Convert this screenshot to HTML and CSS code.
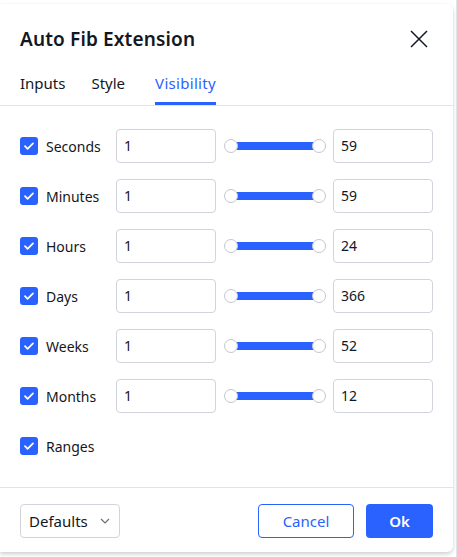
FILE: index.html
```html
<!DOCTYPE html>
<html>
<head>
<meta charset="utf-8">
<link rel="stylesheet" href="styles.css">
</head>
<body>
<div class="dialog">
  <div class="header">
    <div class="title">Auto Fib Extension</div>
    <svg class="close" width="18" height="18" viewBox="0 0 18 18"><path d="M1 1L17 17M17 1L1 17" stroke="#131722" stroke-width="1.5" fill="none"/></svg>
  </div>
  <div class="tabs">
    <div class="tab">Inputs</div>
    <div class="tab tab-style">Style</div>
    <div class="tab active">Visibility</div>
  </div>
  <div class="body">
    <div class="row">
      <span class="cb"><svg width="18" height="18" viewBox="0 0 18 18"><path d="M5 9.2l2.6 2.6L13 6.4" stroke="#fff" stroke-width="1.8" fill="none" stroke-linecap="round" stroke-linejoin="round"/></svg></span>
      <span class="label">Seconds</span>
      <div class="input">1</div>
      <div class="slider"><span class="h"></span><span class="track"></span><span class="h"></span></div>
      <div class="input">59</div>
    </div>
    <div class="row">
      <span class="cb"><svg width="18" height="18" viewBox="0 0 18 18"><path d="M5 9.2l2.6 2.6L13 6.4" stroke="#fff" stroke-width="1.8" fill="none" stroke-linecap="round" stroke-linejoin="round"/></svg></span>
      <span class="label">Minutes</span>
      <div class="input">1</div>
      <div class="slider"><span class="h"></span><span class="track"></span><span class="h"></span></div>
      <div class="input">59</div>
    </div>
    <div class="row">
      <span class="cb"><svg width="18" height="18" viewBox="0 0 18 18"><path d="M5 9.2l2.6 2.6L13 6.4" stroke="#fff" stroke-width="1.8" fill="none" stroke-linecap="round" stroke-linejoin="round"/></svg></span>
      <span class="label">Hours</span>
      <div class="input">1</div>
      <div class="slider"><span class="h"></span><span class="track"></span><span class="h"></span></div>
      <div class="input">24</div>
    </div>
    <div class="row">
      <span class="cb"><svg width="18" height="18" viewBox="0 0 18 18"><path d="M5 9.2l2.6 2.6L13 6.4" stroke="#fff" stroke-width="1.8" fill="none" stroke-linecap="round" stroke-linejoin="round"/></svg></span>
      <span class="label">Days</span>
      <div class="input">1</div>
      <div class="slider"><span class="h"></span><span class="track"></span><span class="h"></span></div>
      <div class="input">366</div>
    </div>
    <div class="row">
      <span class="cb"><svg width="18" height="18" viewBox="0 0 18 18"><path d="M5 9.2l2.6 2.6L13 6.4" stroke="#fff" stroke-width="1.8" fill="none" stroke-linecap="round" stroke-linejoin="round"/></svg></span>
      <span class="label">Weeks</span>
      <div class="input">1</div>
      <div class="slider"><span class="h"></span><span class="track"></span><span class="h"></span></div>
      <div class="input">52</div>
    </div>
    <div class="row">
      <span class="cb"><svg width="18" height="18" viewBox="0 0 18 18"><path d="M5 9.2l2.6 2.6L13 6.4" stroke="#fff" stroke-width="1.8" fill="none" stroke-linecap="round" stroke-linejoin="round"/></svg></span>
      <span class="label">Months</span>
      <div class="input">1</div>
      <div class="slider"><span class="h"></span><span class="track"></span><span class="h"></span></div>
      <div class="input">12</div>
    </div>
    <div class="row">
      <span class="cb"><svg width="18" height="18" viewBox="0 0 18 18"><path d="M5 9.2l2.6 2.6L13 6.4" stroke="#fff" stroke-width="1.8" fill="none" stroke-linecap="round" stroke-linejoin="round"/></svg></span>
      <span class="label">Ranges</span>
    </div>
  </div>
  <div class="footer">
    <div class="select">Defaults <svg width="10" height="6" viewBox="0 0 10 6"><path d="M1 1l4 4 4-4" stroke="#6a6d78" stroke-width="1.2" fill="none"/></svg></div>
    <div class="spacer"></div>
    <div class="btn cancel">Cancel</div>
    <div class="btn ok">Ok</div>
  </div>
</div>
</body>
</html>
```

FILE: styles.css
```css
html, body {
  margin: 0;
  padding: 0;
}
body {
  background: #ffffff;
  font-family: "Noto Sans", "Open Sans", sans-serif;
  color: #131722;
  width: 457px;
  height: 557px;
  overflow: hidden;
  border-right: 1px solid #e0e3eb;
  box-sizing: border-box;
}
.dialog {
  margin-top: 4px;
  width: 453px;
  height: 548px;
  background: #fff;
  border-radius: 0 6px 6px 0;
  box-shadow: 0 2px 4px rgba(0,0,0,0.2);
  display: flex;
  flex-direction: column;
}
.header {
  display: flex;
  align-items: center;
  justify-content: space-between;
  padding: 22px 25px 0 20px;
  height: 26px;
}
.title {
  font-size: 19px;
  font-weight: 600;
  letter-spacing: 0.15px;
}
.close {
  display: block;
}
.tabs {
  display: flex;
  gap: 26px;
  padding: 0 20px;
  margin-top: 14px;
  border-bottom: 1px solid #e0e3eb;
}
.tab {
  font-size: 15px;
  line-height: 22px;
  padding: 6px 0 8px;
  border-bottom: 3px solid transparent;
}
.tab-style {
  margin-right: 4px;
}
.tab.active {
  color: #2962ff;
  border-bottom-color: #2962ff;
  letter-spacing: 0.3px;
}
.body {
  display: flex;
  flex-direction: column;
  gap: 16px;
  padding: 23px 20px 24px;
  border-bottom: 1px solid #e0e3eb;
}
.row {
  display: flex;
  align-items: center;
  height: 34px;
}
.cb {
  width: 18px;
  height: 18px;
  background: #2962ff;
  border-radius: 3px;
  margin-right: 8px;
  display: flex;
}
.label {
  width: 70px;
  font-size: 14px;
}
.input {
  width: 100px;
  height: 34px;
  box-sizing: border-box;
  border: 1px solid #d1d4dc;
  border-radius: 4px;
  font-size: 14px;
  line-height: 32px;
  padding-left: 7px;
}
.slider {
  flex: 1;
  margin: 0 7px 0 8px;
  display: flex;
  align-items: center;
}
.track {
  flex: 1;
  height: 8px;
  background: #2962ff;
  margin: 0 -7px;
}
.h {
  width: 14px;
  height: 14px;
  box-sizing: border-box;
  border-radius: 50%;
  background: #fff;
  border: 1px solid #c4c7cf;
  position: relative;
  z-index: 1;
}
.footer {
  display: flex;
  align-items: center;
  gap: 12px;
  padding: 16px 20px 0;
}
.spacer {
  flex: 1;
}
.select {
  width: 100px;
  height: 34px;
  box-sizing: border-box;
  border: 1px solid #d1d4dc;
  border-radius: 4px;
  font-size: 15px;
  display: flex;
  align-items: center;
  justify-content: space-between;
  padding: 0 9px 0 8px;
}
.btn {
  height: 34px;
  box-sizing: border-box;
  border-radius: 4px;
  font-size: 15px;
  display: flex;
  align-items: center;
  justify-content: center;
}
.cancel {
  width: 96px;
  border: 1px solid #2962ff;
  color: #2962ff;
}
.ok {
  width: 67px;
  background: #2962ff;
  color: #fff;
  font-weight: 600;
}
```
